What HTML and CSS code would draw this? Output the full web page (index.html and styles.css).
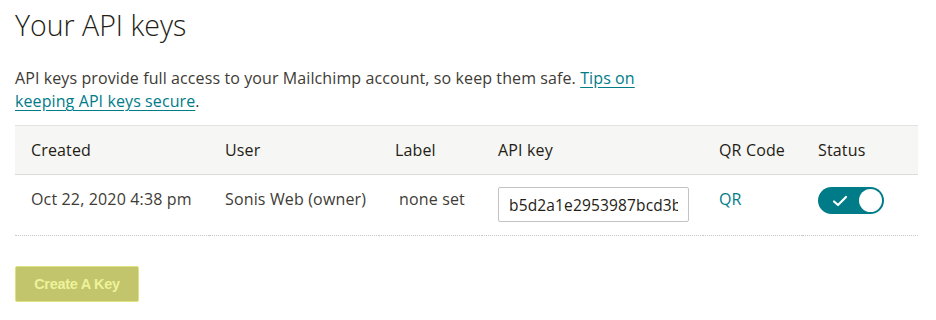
FILE: index.html
```html
<!DOCTYPE html>
<html lang="en">
<head>
    <meta charset="UTF-8">
    <title>Your API keys</title>
    <link rel="stylesheet" href="styles.css">
</head>
<body>

    <h1 class="page-title">Your API keys</h1>

    <p class="intro">
        API keys provide full access to your Mailchimp account, so keep them safe. <a href="#" class="link">Tips on<br>keeping API keys secure</a>.
    </p>

    <table class="keys-table">
        <colgroup>
            <col style="width: 194px">
            <col style="width: 170px">
            <col style="width: 103px">
            <col style="width: 221px">
            <col style="width: 99px">
            <col style="width: 116px">
        </colgroup>
        <thead>
            <tr>
                <th>Created</th>
                <th>User</th>
                <th>Label</th>
                <th>API key</th>
                <th>QR Code</th>
                <th>Status</th>
            </tr>
        </thead>
        <tbody>
            <tr>
                <td>Oct 22, 2020 4:38 pm</td>
                <td>Sonis Web (owner)</td>
                <td class="label-cell">none set</td>
                <td><input class="key-input" type="text" value="b5d2a1e2953987bcd3b8a7e0c4f1-us2" readonly></td>
                <td><a href="#" class="qr-link">QR</a></td>
                <td>
                    <span class="toggle">
                        <svg class="toggle-check" width="16" height="12" viewBox="0 0 16 12">
                            <path d="M2 6.5 L6 10 L14 2" fill="none" stroke="#fff" stroke-width="2.2" stroke-linecap="round" stroke-linejoin="round"/>
                        </svg>
                        <span class="toggle-knob"></span>
                    </span>
                </td>
            </tr>
        </tbody>
    </table>

    <button class="create-button" disabled>Create A Key</button>

</body>
</html>
```

FILE: styles.css
```css
body {
    font-family: 'Open Sans', 'Liberation Sans', sans-serif;
    margin: 0;
    padding: 0 15px;
    background-color: #fff;
    color: #241c15;
}

.page-title {
    font-size: 28.5px;
    font-weight: 300;
    margin: 0;
    padding-top: 6px;
    line-height: 38px;
}

.intro {
    font-size: 16px;
    letter-spacing: 0.1px;
    line-height: 23px;
    margin: 23px 0 12px;
    color: #403b36;
}

.link {
    color: #007c89;
    text-decoration: underline;
    text-underline-offset: 3px;
}

.keys-table {
    border-collapse: collapse;
    table-layout: fixed;
    width: 903px;
    font-size: 16px;
    letter-spacing: 0.15px;
    white-space: nowrap;
}

.keys-table th {
    background-color: #f6f6f4;
    font-weight: 400;
    text-align: left;
    line-height: 24px;
    padding: 12px 16px;
    border-top: 1px solid #e2e2e0;
    border-bottom: 1px solid #dcdcda;
    color: #241c15;
}

.keys-table td {
    text-align: left;
    vertical-align: top;
    line-height: 24px;
    padding: 12px 16px 13px;
    border-bottom: 1px dotted #c8c8c8;
    color: #403b36;
}

.keys-table td.label-cell {
    padding-left: 20px;
}

.key-input {
    display: block;
    box-sizing: border-box;
    width: 191px;
    height: 35px;
    margin: 0;
    padding: 0 10px;
    border: 1px solid #c3c3c3;
    border-radius: 2px;
    font-family: inherit;
    font-size: 15.5px;
    letter-spacing: 0.15px;
    color: #241c15;
    outline: none;
}

.qr-link {
    color: #007c89;
    text-decoration: none;
}

.toggle {
    display: flex;
    align-items: center;
    justify-content: space-between;
    box-sizing: border-box;
    width: 66px;
    height: 27px;
    padding: 0 2px 0 14px;
    border-radius: 14px;
    background-color: #007c89;
}

.toggle-knob {
    width: 23px;
    height: 23px;
    border-radius: 50%;
    background-color: #fff;
}

.create-button {
    display: block;
    margin-top: 30px;
    width: 124px;
    height: 36px;
    padding: 0;
    background-color: #c2c56b;
    color: #eef29c;
    border: 1px solid #dde47e;
    border-radius: 2px;
    font-family: 'Liberation Sans', sans-serif;
    font-weight: 700;
    font-size: 14.5px;
    letter-spacing: -0.3px;
}
```
